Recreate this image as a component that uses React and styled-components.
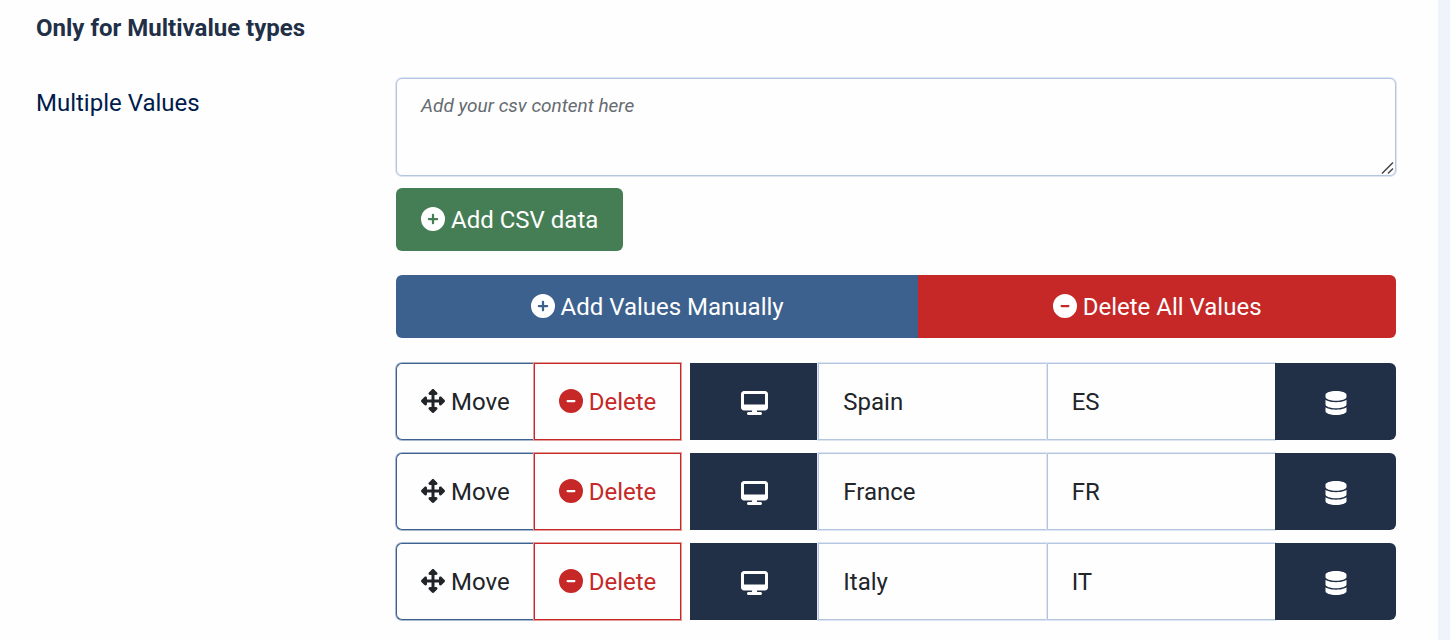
import React from "react";
import styled, { createGlobalStyle, css } from "styled-components";
import {
  FaCirclePlus,
  FaCircleMinus,
  FaUpDownLeftRight,
  FaDesktop,
  FaDatabase,
} from "react-icons/fa6";

const GlobalStyle = createGlobalStyle`
  *, *::before, *::after { box-sizing: border-box; }
  body {
    margin: 0;
    background: #eff4fc;
    color: #212529;
    font-family: Roboto, "Liberation Sans", sans-serif;
    font-size: 24px;
    line-height: 36px;
  }
  button, input, textarea { font: inherit; color: inherit; margin: 0; }
  button svg { flex: none; margin-bottom: 2px; }
`;

const Panel = styled.main`
  min-height: 100vh;
  margin-right: 12px;
  padding: 10px 42px 16px 36px;
  background: #fefefe;
`;

const Heading = styled.h3`
  margin: 0 0 32px;
  font-size: 24px;
  line-height: 36px;
  font-weight: 700;
  color: #212f47;
`;

const Field = styled.div`
  display: grid;
  grid-template-columns: 360px minmax(0, 1fr);
  align-items: start;
`;

const FieldLabel = styled.label`
  padding-top: 7px;
  color: #001b4c;
`;

const Controls = styled.div`
  display: flex;
  flex-direction: column;
  align-items: stretch;
`;

const CsvBox = styled.div`
  position: relative;
  display: flex;
  margin-bottom: 12px;
`;

const CsvInput = styled.textarea`
  flex: 1;
  min-width: 0;
  height: 98px;
  padding: 9px 24px;
  border: 1px solid #b3c5df;
  border-radius: 6px;
  box-shadow: 0 0 0 1px #dce5f1;
  background: #fefefe;
  resize: vertical;
  &::placeholder { color: #656b70; opacity: 1; font-size: 19px; font-style: italic; }
  &::-webkit-resizer { background: transparent; }
`;

const Grip = styled.svg`
  position: absolute;
  right: 1px;
  bottom: 1px;
  pointer-events: none;
`;

const tones = {
  success: css`background: #457d54; color: #fff;`,
  primary: css`background: #3d618e; color: #fff;`,
  danger: css`background: #c52827; color: #fff;`,
};

const SolidButton = styled.button`
  display: flex;
  align-items: center;
  justify-content: center;
  gap: 6px;
  height: 63px;
  padding: 0 25px;
  border: 0;
  border-radius: 6px;
  cursor: pointer;
  white-space: nowrap;
  ${({ $tone }) => tones[$tone]}
`;

const CsvButton = styled(SolidButton)`
  align-self: flex-start;
  margin-bottom: 24px;
`;

const ActionBar = styled.div`
  display: flex;
  margin-bottom: 25px;
  ${SolidButton} { flex: 1 1 auto; }
  ${SolidButton}:first-child { border-radius: 6px 0 0 6px; }
  ${SolidButton}:last-child { border-radius: 0 6px 6px 0; }
`;

const Rows = styled.ul`
  display: flex;
  flex-direction: column;
  gap: 13px;
  margin: 0;
  padding: 0;
  list-style: none;
`;

const Row = styled.li`
  display: flex;
  height: 77px;
`;

const OutlineButton = styled.button`
  display: flex;
  align-items: center;
  gap: 6px;
  padding: 0 24px;
  border: 1px solid;
  background: #fefefe;
  white-space: nowrap;
`;

const MoveButton = styled(OutlineButton)`
  border-color: #3d618e;
  border-right: 0;
  border-radius: 6px 0 0 6px;
  box-shadow: 0 0 0 1px #a9bad0;
  cursor: move;
`;

const DeleteButton = styled(OutlineButton)`
  border-color: #c52827;
  box-shadow: 0 0 0 1px #e59d9c;
  color: #c52827;
  cursor: pointer;
`;

const ValueGroup = styled.div`
  display: flex;
  flex: 1;
  min-width: 0;
  margin-left: 9px;
`;

const Addon = styled.span`
  display: flex;
  flex: none;
  align-items: center;
  justify-content: center;
  width: ${({ $width }) => $width}px;
  padding-top: 2px;
  border-radius: ${({ $end }) => ($end ? "0 6px 6px 0" : "0")};
  background: #212f47;
  color: #fff;
`;

const MonitorIcon = styled(FaDesktop)`
  width: 27px;
  height: 24px;
`;

const ValueInput = styled.input`
  flex: 1;
  width: 0;
  min-width: 0;
  padding: 0 24px;
  border: 1px solid #b3c5df;
  border-right: 0;
  border-radius: 0;
  box-shadow: 0 0 0 1px #dce5f1;
  background: #fefefe;
`;

const values = [
  ["Spain", "ES"],
  ["France", "FR"],
  ["Italy", "IT"],
];

function ValueRow({ name, code }) {
  return (
    <Row>
      <MoveButton type="button"><FaUpDownLeftRight />Move</MoveButton>
      <DeleteButton type="button"><FaCircleMinus />Delete</DeleteButton>
      <ValueGroup>
        <Addon $width={128}><MonitorIcon /></Addon>
        <ValueInput aria-label="Displayed value" defaultValue={name} />
        <ValueInput aria-label="Stored value" defaultValue={code} />
        <Addon $width={121} $end><FaDatabase /></Addon>
      </ValueGroup>
    </Row>
  );
}

export default function App() {
  return (
    <>
      <GlobalStyle />
      <Panel>
        <Heading>Only for Multivalue types</Heading>
        <Field>
          <FieldLabel htmlFor="csv">Multiple Values</FieldLabel>
          <Controls>
            <CsvBox>
              <CsvInput id="csv" placeholder="Add your csv content here" />
              <Grip width="14" height="14" viewBox="0 0 14 14" aria-hidden="true">
                <path d="M1 12.5 12 1.5M7 12.5 12 7.5" stroke="#444" strokeWidth="1.5" />
              </Grip>
            </CsvBox>
            <CsvButton type="button" $tone="success"><FaCirclePlus />Add CSV data</CsvButton>
            <ActionBar>
              <SolidButton type="button" $tone="primary"><FaCirclePlus />Add Values Manually</SolidButton>
              <SolidButton type="button" $tone="danger"><FaCircleMinus />Delete All Values</SolidButton>
            </ActionBar>
            <Rows>
              {values.map(([name, code]) => <ValueRow key={code} name={name} code={code} />)}
            </Rows>
          </Controls>
        </Field>
      </Panel>
    </>
  );
}
